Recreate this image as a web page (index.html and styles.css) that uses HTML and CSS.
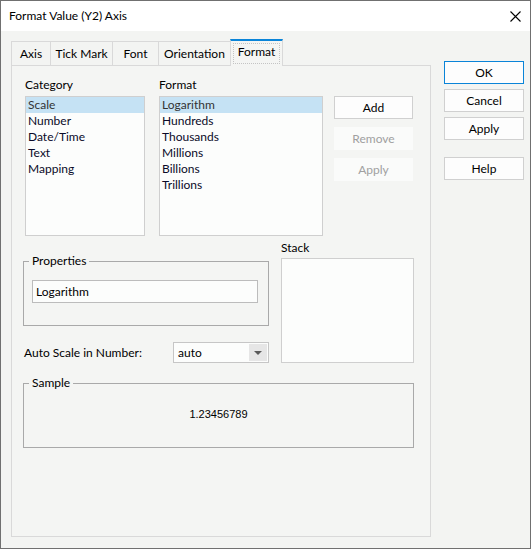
FILE: index.html
```html
<!DOCTYPE html>
<html>
	<head>
		<meta charset="utf-8">
		<title>Format Value (Y2) Axis</title>
		<link rel="stylesheet" href="styles.css">
	</head>
	<body>
		<div class="window">
			<div class="titlebar">
				<span class="title">Format Value (Y2) Axis</span>
				<svg class="close-x" width="11" height="11" viewBox="0 0 11 11">
					<path d="M0.5 0.5 L10.5 10.5 M10.5 0.5 L0.5 10.5" stroke="#000" stroke-width="1.1" fill="none"/>
				</svg>
			</div>
			<div class="dlg-body">
				<div class="tab-ctl">
					<div class="tabs">
						<div class="tab tab-axis">Axis</div>
						<div class="tab tab-tick">Tick Mark</div>
						<div class="tab tab-font">Font</div>
						<div class="tab tab-orient">Orientation</div>
						<div class="tab tab-format selected"><span class="focus">Format</span></div>
					</div>
					<div class="panel">
						<div class="row-top">
							<div class="col-cat">
								<div class="lbl">Category</div>
								<ul class="list">
									<li class="sel">Scale</li>
									<li>Number</li>
									<li>Date/Time</li>
									<li>Text</li>
									<li>Mapping</li>
								</ul>
							</div>
							<div class="col-fmt">
								<div class="lbl">Format</div>
								<ul class="list">
									<li class="sel">Logarithm</li>
									<li>Hundreds</li>
									<li>Thousands</li>
									<li>Millions</li>
									<li>Billions</li>
									<li>Trillions</li>
								</ul>
							</div>
							<div class="col-btns">
								<div class="btn">Add</div>
								<div class="btn disabled">Remove</div>
								<div class="btn disabled">Apply</div>
							</div>
						</div>
						<div class="row-mid">
							<div class="mid-left">
								<fieldset class="group props">
									<legend>Properties</legend>
									<div class="textbox">Logarithm</div>
								</fieldset>
								<div class="autoscale">
									<span>Auto Scale in Number:</span>
									<div class="combo">
										<span class="combo-val">auto</span>
										<span class="drop">
											<svg width="8" height="4" viewBox="0 0 8 4"><path d="M0 0 H8 L4 4 Z" fill="#5a5a5a"/></svg>
										</span>
									</div>
								</div>
							</div>
							<div class="stack">
								<div class="lbl stack-lbl">Stack</div>
								<div class="stack-box"></div>
							</div>
						</div>
						<fieldset class="group sample">
							<legend>Sample</legend>
							<div class="sample-val">1.23456789</div>
						</fieldset>
					</div>
				</div>
				<div class="side-btns">
					<div class="btn side default">OK</div>
					<div class="btn side">Cancel</div>
					<div class="btn side">Apply</div>
					<div class="btn side help">Help</div>
				</div>
			</div>
		</div>
	</body>
</html>
```
FILE: styles.css
```css
body{
	margin: 0;
	font-family: Lato, "Liberation Sans", sans-serif;
	font-size: 12px;
	color: #000;
}
.window{
	width: 531px;
	height: 549px;
	box-sizing: border-box;
	border: 1px solid #707070;
	background: #f3f4f2;
	display: flex;
	flex-direction: column;
}
.titlebar{
	height: 30px;
	line-height: 30px;
	background: #fff;
	display: flex;
	justify-content: space-between;
	align-items: center;
	padding: 0 9px 0 8px;
}
.close-x{
	display: block;
}
.dlg-body{
	display: flex;
	padding: 8px 0 0 10px;
	flex: 1;
}
.tab-ctl{
	width: 420px;
}
.tabs{
	display: flex;
	align-items: flex-end;
	height: 26px;
}
.tab{
	box-sizing: border-box;
	height: 24px;
	line-height: 23px;
	border: 1px solid #d9d9d9;
	border-bottom: none;
	margin-right: -1px;
	text-align: center;
}
.tab-axis{ width: 40px; }
.tab-tick{ width: 63px; }
.tab-font{ width: 47px; }
.tab-orient{ width: 73px; }
.tab-format{ width: 53px; }
.tab.selected{
	height: 27px;
	margin-bottom: -1px;
	border-top: 2px solid #0a84d8;
	background: #f4f5f3;
	padding: 2px 2px 0 2px;
	position: relative;
	z-index: 1;
}
.focus{
	display: block;
	height: 19px;
	line-height: 15px;
	border: 1px dotted #c4c4c4;
}
.panel{
	box-sizing: border-box;
	height: 472px;
	border: 1px solid #d9d9d9;
	background: #f4f5f3;
	padding: 11px 0 0 11px;
}
.row-top{
	display: flex;
	padding-left: 2px;
}
.col-cat{
	width: 120px;
	margin-right: 14px;
}
.col-fmt{
	width: 164px;
	margin-right: 11px;
}
.col-btns{
	width: 79px;
	padding-top: 19px;
}
.lbl{
	line-height: 16px;
	margin-bottom: 3px;
}
.list{
	box-sizing: border-box;
	height: 140px;
	margin: 0;
	padding: 0;
	list-style: none;
	border: 1px solid #cfcfcf;
	background: #fcfdfc;
}
.list li{
	height: 16px;
	line-height: 16px;
	padding-left: 2px;
	color: #0a0a28;
}
.list li.sel{
	background: #c5e2f4;
	color: #333;
}
.btn{
	box-sizing: border-box;
	height: 23px;
	line-height: 21px;
	text-align: center;
	border: 1px solid #d0d0d0;
	background: #fdfdfd;
	margin-bottom: 8px;
}
.btn.disabled{
	border-color: #fafbfa;
	background: #fafbfa;
	color: #a0a0a0;
}
.row-mid{
	display: flex;
	margin-top: 4px;
}
.mid-left{
	width: 246px;
	margin-right: 12px;
}
.group{
	margin: 0;
	min-width: 0;
	border: 1px solid #a9a9a9;
}
.group legend{
	padding: 0 3px;
	margin-left: -3px;
	line-height: 16px;
}
.props{
	box-sizing: border-box;
	width: 246px;
	margin-top: 13px;
	padding: 11px 10px 22px 8px;
}
.textbox{
	height: 23px;
	box-sizing: border-box;
	line-height: 21px;
	border: 1px solid #bcbcbc;
	background: #fcfdfc;
	padding-left: 3px;
}
.autoscale{
	display: flex;
	justify-content: space-between;
	align-items: center;
	margin-top: 16px;
	padding-left: 1px;
}
.combo{
	box-sizing: border-box;
	width: 96px;
	height: 21px;
	border: 1px solid #c6c6c6;
	background: #fcfdfc;
	display: flex;
	justify-content: space-between;
}
.combo-val{
	line-height: 19px;
	padding-left: 4px;
}
.drop{
	width: 18px;
	margin: 1px;
	background: #e6e6e6;
	display: flex;
	align-items: center;
	justify-content: center;
}
.drop svg{
	display: block;
}
.stack{
	width: 133px;
}
.stack-lbl{
	margin-bottom: 2px;
}
.stack-box{
	box-sizing: border-box;
	height: 105px;
	border: 1px solid #cfcfcf;
	background: #fcfdfc;
}
.sample{
	box-sizing: border-box;
	width: 391px;
	margin-top: 12px;
	padding: 15px 8px 25px 8px;
}
.sample-val{
	line-height: 16px;
	text-align: center;
	font-family: "Liberation Sans", sans-serif;
	font-size: 11px;
}
.side-btns{
	width: 80px;
	margin-left: 13px;
	padding-top: 22px;
}
.btn.side{
	margin-bottom: 5px;
}
.btn.default{
	border-color: #0a84d8;
}
.btn.side.help{
	margin-top: 17px;
}
```
